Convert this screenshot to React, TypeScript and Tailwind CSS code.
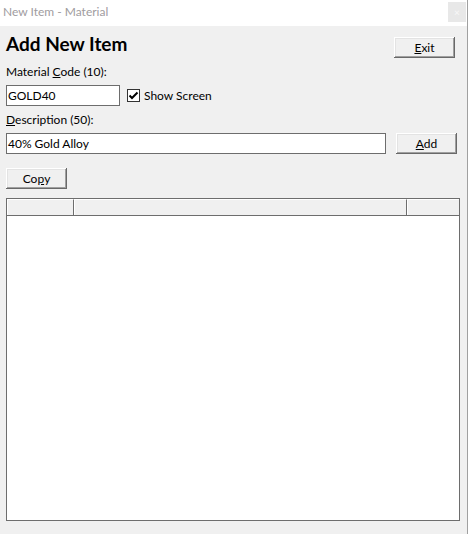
import React from "react";

const font = { fontFamily: "Lato, 'Noto Sans', sans-serif" };

function Btn({ children, className = "" }: { children: React.ReactNode; className?: string }) {
  return (
    <div
      className={
        "flex items-center justify-center w-[61px] h-[21px] bg-[#f0f0f0] text-[12px] text-black shadow-[inset_-1px_-1px_#696969,inset_1px_1px_#ffffff,inset_-2px_-2px_#a0a0a0,inset_2px_2px_#e3e3e3] " +
        className
      }
    >
      {children}
    </div>
  );
}

export default function App() {
  return (
    <div className="flex w-[469px] h-[534px] bg-white text-black" style={font}>
      <div className="flex flex-col w-[467px] h-full bg-[#f0f0f0]">
        <div className="flex items-start justify-between h-[26px] bg-white">
          <div className="pl-[3px] pt-[4px] text-[12px] leading-[16px] text-[#a09ca0]">New Item - Material</div>
          <div className="mt-[2px] mr-[1px] w-[18px] h-[20px] bg-[#e8e8e8] flex items-center justify-center text-[10px] text-[#f8f8f8] leading-none">
            ×
          </div>
        </div>
        <div className="flex flex-col pl-[6px]">
          <div className="flex items-start justify-between mt-[6px] pr-[12px]">
            <div className="text-[19px] leading-[24px] font-bold">Add New Item</div>
            <Btn className="mt-[5px]">
              <span className="underline">E</span>xit
            </Btn>
          </div>
          <div className="mt-[6px] text-[12px] leading-[16px]">
            Material <span className="underline">C</span>ode (10):
          </div>
          <div className="flex items-center mt-[5px]">
            <div className="w-[114px] h-[21px] bg-white border border-[#6d6d6d] text-[12px] leading-[19px] pl-[1px]">GOLD40</div>
            <div className="ml-[7px] w-[13px] h-[13px] border border-[#333333] bg-white flex items-center justify-center">
              <svg width="11" height="11" viewBox="0 0 11 11">
                <path d="M1.5 5.5 L4 8 L9.5 2.5" stroke="#000" strokeWidth="2" fill="none" />
              </svg>
            </div>
            <div className="ml-[4px] text-[12px] leading-[16px]">Show Screen</div>
          </div>
          <div className="mt-[6px] text-[12px] leading-[16px]">
            <span className="underline">D</span>escription (50):
          </div>
          <div className="flex items-center mt-[5px]">
            <div className="w-[380px] h-[21px] bg-white border border-[#6d6d6d] text-[12px] leading-[19px] pl-[1px]">40% Gold Alloy</div>
            <Btn className="ml-[10px]">
              <span className="underline">A</span>dd
            </Btn>
          </div>
          <Btn className="mt-[14px]">
            Co<span className="underline">p</span>y
          </Btn>
          <div className="mt-[9px] w-[454px] h-[323px] border border-[#6d6d6d] bg-white flex flex-col">
            <div className="flex h-[17px] border-b border-[#6d6d6d] bg-[#f0f0f0]">
              <div className="w-[67px] border-l border-t border-white border-r border-r-[#6d6d6d]" />
              <div className="w-[333px] border-l border-t border-white border-r border-r-[#6d6d6d]" />
              <div className="w-[52px] border-l border-t border-white" />
            </div>
          </div>
        </div>
      </div>
      <div className="w-px h-full bg-[#a0a0a0]" />
      <div className="w-px h-full bg-white" />
    </div>
  );
}
